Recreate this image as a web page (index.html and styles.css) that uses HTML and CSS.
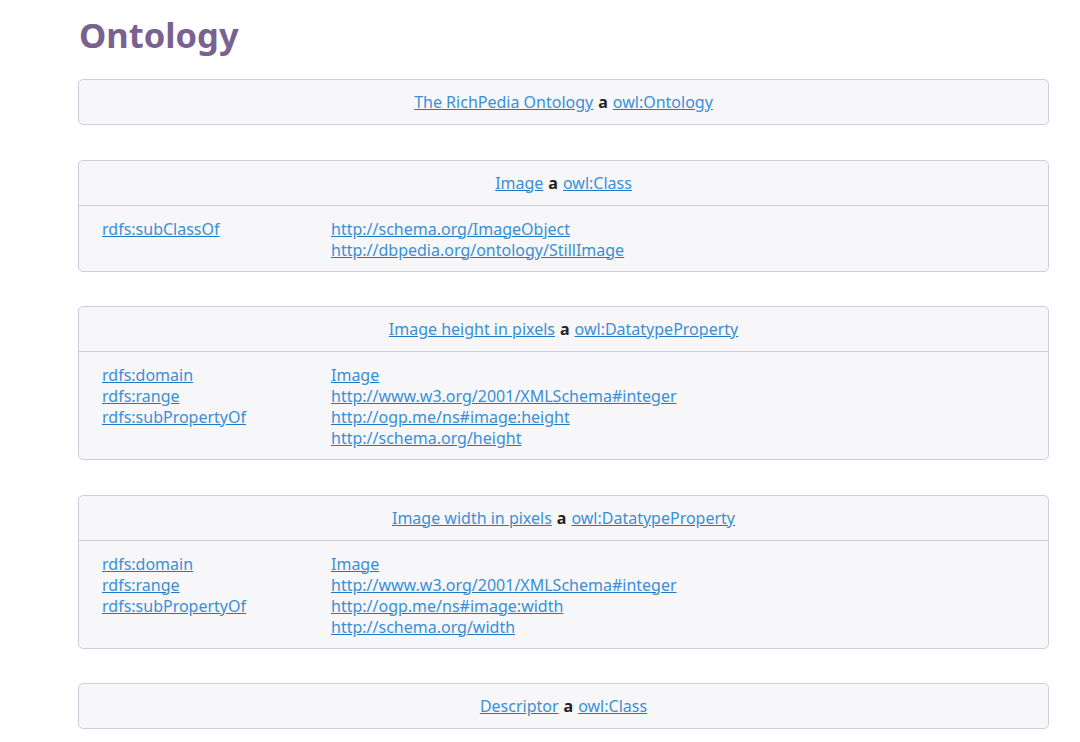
FILE: index.html
```html
<!DOCTYPE html>
<html>
<head>
<meta charset="utf-8">
<title>Ontology</title>
<link rel="stylesheet" href="styles.css">
</head>
<body>
<main class="page">
  <h1 class="title">Ontology</h1>

  <section class="card">
    <div class="card-head"><a href="#">The RichPedia Ontology</a> <b>a</b> <a href="#">owl:Ontology</a></div>
  </section>

  <section class="card">
    <div class="card-head"><a href="#">Image</a> <b>a</b> <a href="#">owl:Class</a></div>
    <div class="card-body">
      <div class="labels">
        <a href="#">rdfs:subClassOf</a>
      </div>
      <div class="values">
        <a href="#">http://schema.org/ImageObject</a>
        <a href="#">http://dbpedia.org/ontology/StillImage</a>
      </div>
    </div>
  </section>

  <section class="card">
    <div class="card-head"><a href="#">Image height in pixels</a> <b>a</b> <a href="#">owl:DatatypeProperty</a></div>
    <div class="card-body">
      <div class="labels">
        <a href="#">rdfs:domain</a>
        <a href="#">rdfs:range</a>
        <a href="#">rdfs:subPropertyOf</a>
      </div>
      <div class="values">
        <a href="#">Image</a>
        <a href="#">http://www.w3.org/2001/XMLSchema#integer</a>
        <a href="#">http://ogp.me/ns#image:height</a>
        <a href="#">http://schema.org/height</a>
      </div>
    </div>
  </section>

  <section class="card">
    <div class="card-head"><a href="#">Image width in pixels</a> <b>a</b> <a href="#">owl:DatatypeProperty</a></div>
    <div class="card-body">
      <div class="labels">
        <a href="#">rdfs:domain</a>
        <a href="#">rdfs:range</a>
        <a href="#">rdfs:subPropertyOf</a>
      </div>
      <div class="values">
        <a href="#">Image</a>
        <a href="#">http://www.w3.org/2001/XMLSchema#integer</a>
        <a href="#">http://ogp.me/ns#image:width</a>
        <a href="#">http://schema.org/width</a>
      </div>
    </div>
  </section>

  <section class="card">
    <div class="card-head"><a href="#">Descriptor</a> <b>a</b> <a href="#">owl:Class</a></div>
  </section>
</main>
</body>
</html>
```
FILE: styles.css
```css
html, body {
  margin: 0;
  padding: 0;
  background: #ffffff;
}
body {
  font-family: "Noto Sans", "Open Sans", sans-serif;
  font-size: 16px;
  color: #222;
}
.page {
  width: 971px;
  margin-left: 78px;
  padding-top: 13px;
  display: flex;
  flex-direction: column;
  gap: 34.5px;
}
.title {
  margin: 0 0 -12.5px 1px;
  font-size: 34.5px;
  line-height: 44px;
  font-weight: 700;
  color: #7a6290;
}
.card {
  background: #f7f7fa;
  border: 1px solid #d2cbdd;
  border-radius: 5px;
}
.card-head {
  height: 44px;
  display: flex;
  align-items: center;
  justify-content: center;
  gap: 5px;
  white-space: pre;
}
.card-head b {
  font-weight: 700;
  color: #222;
}
.card-body {
  border-top: 1px solid #d2cbdd;
  display: flex;
  padding: 13px 23px 10px;
  line-height: 21px;
}
.labels {
  width: 229px;
  display: flex;
  flex-direction: column;
  align-items: flex-start;
}
.values {
  display: flex;
  flex-direction: column;
  align-items: flex-start;
}
a {
  color: #3a8fd6;
  text-decoration: underline;
  text-decoration-color: #1f78c6;
}
```
